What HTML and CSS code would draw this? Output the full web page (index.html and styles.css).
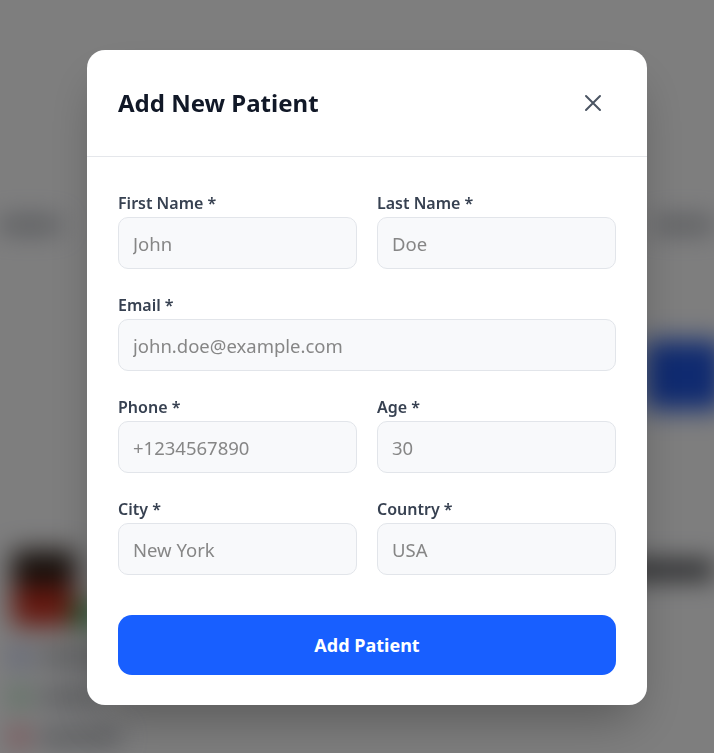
FILE: index.html
```html
<!DOCTYPE html>
<html lang="en">
<head>
<meta charset="utf-8">
<title>Add New Patient</title>
<link rel="stylesheet" href="styles.css">
</head>
<body>
<div class="page">
  <div class="page-top"><span class="dot-blue"></span></div>
  <div class="page-row">
    <span class="txt w60"></span>
    <span class="txt w60"></span>
  </div>
  <div class="page-actions">
    <span class="blue-btn"></span>
  </div>
  <div class="cards">
    <div class="card">
      <div class="card-head">
        <div class="avatar"><span class="hair"></span><span class="shirt"></span></div>
        <span class="green-badge"></span>
      </div>
      <div class="meta"><span class="ic blue"></span><span class="txt w80"></span></div>
      <div class="meta"><span class="ic green"></span><span class="txt w60"></span></div>
      <div class="meta"><span class="ic red"></span><span class="txt w80"></span></div>
    </div>
    <div class="card right-card">
      <div class="card-title"></div>
    </div>
  </div>
</div>

<div class="overlay">
  <div class="modal" role="dialog" aria-labelledby="modal-title">
    <div class="modal-header">
      <h2 id="modal-title" class="modal-title">Add New Patient</h2>
      <button class="close-btn" aria-label="Close">
        <svg width="20" height="20" viewBox="0 0 20 20" fill="none" stroke="currentColor" stroke-width="2" stroke-linecap="round"><path d="M3 3 L17 17 M17 3 L3 17"/></svg>
      </button>
    </div>
    <form class="modal-body">
      <div class="grid">
        <div class="field">
          <label class="label">First Name *</label>
          <input class="input" placeholder="John">
        </div>
        <div class="field">
          <label class="label">Last Name *</label>
          <input class="input" placeholder="Doe">
        </div>
        <div class="field span2">
          <label class="label">Email *</label>
          <input class="input" placeholder="john.doe@example.com">
        </div>
        <div class="field">
          <label class="label">Phone *</label>
          <input class="input" placeholder="+1234567890">
        </div>
        <div class="field">
          <label class="label">Age *</label>
          <input class="input" placeholder="30">
        </div>
        <div class="field">
          <label class="label">City *</label>
          <input class="input" placeholder="New York">
        </div>
        <div class="field">
          <label class="label">Country *</label>
          <input class="input" placeholder="USA">
        </div>
      </div>
      <button type="button" class="submit">Add Patient</button>
    </form>
  </div>
</div>
</body>
</html>
```
FILE: styles.css
```css
* { box-sizing: border-box; }
html, body { margin: 0; padding: 0; }
body {
  width: 714px;
  height: 753px;
  overflow: hidden;
  font-family: "Noto Sans", "Open Sans", sans-serif;
  background: #fcfcfd;
}

/* blurred background page */
.page {
  height: 753px;
  filter: blur(13px);
  display: flex;
  flex-direction: column;
}
.page-top {
  height: 210px;
  display: flex;
  padding: 88px 0 0 196px;
}
.dot-blue { width: 20px; height: 8px; background: #e4e8f4; border-radius: 4px; }
.page-row {
  height: 30px;
  display: flex;
  justify-content: space-between;
  align-items: center;
}
.txt { display: block; height: 10px; background: #80858f; border-radius: 4px; }
.w60 { width: 60px; }
.w80 { width: 80px; }
.page-actions {
  height: 110px;
  margin-top: 100px;
  display: flex;
  justify-content: flex-end;
  align-items: flex-start;
}
.blue-btn { width: 80px; height: 70px; background: #1f55e0; border-radius: 8px; margin-right: -10px; }
.cards {
  display: flex;
  justify-content: space-between;
  margin-top: 100px;
}
.card { width: 180px; padding: 0 0 0 12px; }
.card-head { display: flex; align-items: flex-end; }
.avatar {
  width: 64px; height: 76px;
  display: flex; flex-direction: column;
  border-radius: 6px; overflow: hidden;
}
.hair { height: 36px; background: #2e2018; }
.shirt { flex: 1; background: #c8301f; }
.green-badge { width: 26px; height: 24px; background: #34a853; margin-left: -4px; }
.meta { display: flex; align-items: center; gap: 14px; margin-top: 22px; height: 18px; }
.ic { width: 14px; height: 16px; border-radius: 3px; }
.ic.blue { background: #8fa3e6; }
.ic.green { background: #7fcf90; }
.ic.red { background: #f5606d; }
.right-card { width: 90px; padding: 0; }
.card-title { height: 16px; margin-top: 12px; background: #25272b; }

/* overlay */
.overlay {
  position: fixed;
  inset: 0;
  background: rgba(0, 0, 0, 0.5);
  display: flex;
  justify-content: center;
  align-items: flex-start;
  padding: 50px 0 0 20px;
}
.modal {
  width: 560px;
  background: #ffffff;
  border-radius: 18px;
  box-shadow: 0 25px 50px -12px rgba(0, 0, 0, 0.3);
  overflow: hidden;
}
.modal-header {
  height: 107px;
  display: flex;
  align-items: center;
  justify-content: space-between;
  padding: 0 44px 0 31px;
  border-bottom: 1px solid #e5e7eb;
}
.modal-title {
  margin: 0;
  font-size: 24px;
  font-weight: 700;
  color: #111827;
  line-height: 32px;
}
.close-btn {
  background: none;
  border: 0;
  padding: 0;
  width: 20px;
  height: 20px;
  color: #4b5563;
  display: flex;
}
.modal-body {
  padding: 34px 31px 30px;
}
.grid {
  display: grid;
  grid-template-columns: minmax(0, 1fr) minmax(0, 1fr);
  column-gap: 20px;
  row-gap: 24px;
}
.span2 { grid-column: 1 / -1; }
.field { display: flex; flex-direction: column; gap: 2px; min-width: 0; }
.label {
  font-size: 16px;
  line-height: 24px;
  font-weight: 600;
  color: #374151;
}
.input {
  width: 100%;
  min-width: 0;
  height: 52px;
  border: 1px solid #e2e5ea;
  background: #f8f9fb;
  border-radius: 10px;
  padding: 0 14px;
  font-family: inherit;
  font-size: 18.5px;
  color: #374151;
  outline: none;
}
.input::placeholder { color: #868686; }
.submit {
  margin-top: 40px;
  width: 100%;
  height: 60px;
  border: 0;
  border-radius: 14px;
  background: #185fff;
  color: #ffffff;
  font-family: inherit;
  font-size: 18px;
  font-weight: 700;
}
```
